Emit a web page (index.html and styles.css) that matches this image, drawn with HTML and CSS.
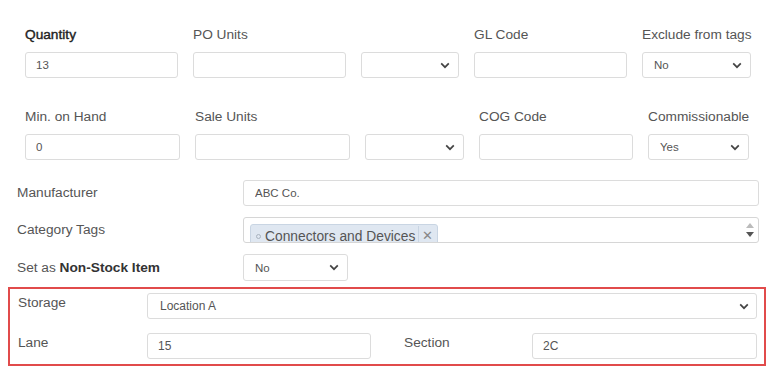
FILE: index.html
```html
<!DOCTYPE html>
<html lang="en">
<head>
    <meta charset="UTF-8">
    <meta name="viewport" content="width=device-width, initial-scale=1.0">
    <title>Item details</title>

    <link rel="stylesheet" href="styles.css">
</head>
<body>

<!-- top block: two rows of label over field -->
<div class="cols cols-a">
    <label class="strong">Quantity</label>
    <label>PO Units</label>
    <label></label>
    <label>GL Code</label>
    <label>Exclude from tags</label>

    <input type="text" class="field" value="13">
    <input type="text" class="field" value="">
    <div class="field select"><span></span><svg width="10" height="7" viewBox="0 0 10 7"><path d="M1.2 1.4l3.8 3.8 3.8-3.8" fill="none" stroke="#444" stroke-width="1.7"/></svg></div>
    <input type="text" class="field" value="">
    <div class="field select"><span>No</span><svg width="10" height="7" viewBox="0 0 10 7"><path d="M1.2 1.4l3.8 3.8 3.8-3.8" fill="none" stroke="#444" stroke-width="1.7"/></svg></div>
</div>

<div class="cols cols-b">
    <label>Min. on Hand</label>
    <label>Sale Units</label>
    <label></label>
    <label>COG Code</label>
    <label>Commissionable</label>

    <input type="text" class="field" value="0">
    <input type="text" class="field" value="">
    <div class="field select"><span></span><svg width="10" height="7" viewBox="0 0 10 7"><path d="M1.2 1.4l3.8 3.8 3.8-3.8" fill="none" stroke="#444" stroke-width="1.7"/></svg></div>
    <input type="text" class="field" value="">
    <div class="field select"><span>Yes</span><svg width="10" height="7" viewBox="0 0 10 7"><path d="M1.2 1.4l3.8 3.8 3.8-3.8" fill="none" stroke="#444" stroke-width="1.7"/></svg></div>
</div>

<!-- label left, field right -->
<div class="rows">
    <div class="row">
        <label>Manufacturer</label>
        <input type="text" class="field grow" value="ABC Co.">
    </div>
    <div class="row">
        <label>Category Tags</label>
        <div class="field grow tags">
            <div class="tag-list">
                <span class="chip"><span class="dot"></span>Connectors and Devices<span class="chip-x">&#x2715;</span></span>
            </div>
            <div class="spin">
                <svg width="8" height="5" viewBox="0 0 8 5"><path d="M0 5L4 0 8 5z" fill="#bbb"/></svg>
                <svg width="8" height="5" viewBox="0 0 8 5"><path d="M0 0L4 5 8 0z" fill="#555"/></svg>
            </div>
        </div>
    </div>
    <div class="row">
        <label>Set as <b>Non-Stock Item</b></label>
        <div class="field select small"><span>No</span><svg width="10" height="7" viewBox="0 0 10 7"><path d="M1.2 1.4l3.8 3.8 3.8-3.8" fill="none" stroke="#444" stroke-width="1.7"/></svg></div>
    </div>
</div>

<!-- highlighted storage block -->
<div class="storage">
    <label>Storage</label>
    <div class="field select wide"><span>Location A</span><svg width="10" height="7" viewBox="0 0 10 7"><path d="M1.2 1.4l3.8 3.8 3.8-3.8" fill="none" stroke="#444" stroke-width="1.7"/></svg></div>

    <label>Lane</label>
    <input type="text" class="field" value="15">
    <label class="section">Section</label>
    <input type="text" class="field" value="2C">
</div>

</body>
</html>
```

FILE: styles.css
```css
body {
    margin: 0;
    background: #fff;
    font-family: "Liberation Sans", Arial, sans-serif;
    color: #555;
}

label {
    font-size: 13.7px;
    line-height: 18px;
    color: #555;
    white-space: nowrap;
}
label b {
    color: #333;
    font-weight: bold;
}
.strong {
    color: #222;
    -webkit-text-stroke: 0.4px #222;
}

.field {
    box-sizing: border-box;
    height: 26px;
    margin: 0;
    padding: 0 10px;
    border: 1px solid #dcdcdc;
    border-radius: 3px;
    background: #fff;
    font-family: "Liberation Sans", Arial, sans-serif;
    font-size: 11.5px;
    color: #555;
    outline: none;
}

.select {
    display: flex;
    align-items: center;
    justify-content: space-between;
    padding: 0 8px 0 11px;
}

/* label-over-field grids */
.cols {
    display: grid;
    column-gap: 15px;
    row-gap: 8px;
    padding-left: 25px;
}
.cols-a {
    margin-top: 26px;
    grid-template-columns: 153px 153px 98px 153px 109px;
}
.cols-b {
    margin-top: 30px;
    grid-template-columns: 155px 155px 99px 154px 101px;
}

.rows {
    margin-top: 20px;
    padding: 0 9px 0 17px;
    display: flex;
    flex-direction: column;
    gap: 11px;
}
.row {
    display: flex;
    align-items: center;
}
.row > label {
    width: 226px;
    flex: none;
}
.grow {
    flex: 1;
}
.row > .grow {
    padding-left: 11px;
}
.small {
    width: 105px;
    height: 27px;
}

.tags {
    display: flex;
    padding: 0 0 0 6px !important;
    overflow: hidden;
    border-color: #d6d6d6;
}
.tag-list {
    flex: 1;
    padding-top: 6px;
}
.chip {
    display: inline-flex;
    align-items: center;
    height: 22px;
    padding-left: 5px;
    border: 1px solid #c9d5e3;
    border-radius: 3px;
    background: #dfe7f1;
    font-size: 13.8px;
    color: #555;
}
.dot {
    width: 3px;
    height: 3px;
    margin-right: 4px;
    border: 1px solid #a9b3bf;
    border-radius: 50%;
}
.chip-x {
    margin-left: 3px;
    padding: 0 4px 0 3px;
    border-left: 1px solid #c9d5e3;
    font-size: 13px;
    color: #888;
    line-height: 20px;
}
.spin {
    width: 16px;
    display: flex;
    flex-direction: column;
    align-items: center;
    justify-content: center;
    gap: 4px;
}

/* red highlight */
.storage {
    box-sizing: border-box;
    width: 758px;
    margin: 6px 0 0 8px;
    padding: 4px 7px 5px 8px;
    border: 2px solid #e14b4b;
    display: grid;
    grid-template-columns: 129px 224px 161px 225px;
    row-gap: 14px;
}
.storage label {
    padding-top: 1px;
}
.storage .field {
    font-size: 12px;
}
.storage .wide {
    grid-column: 2 / 5;
    padding: 0 7px 0 12px;
}
.storage .section {
    padding-left: 33px;
}
```
